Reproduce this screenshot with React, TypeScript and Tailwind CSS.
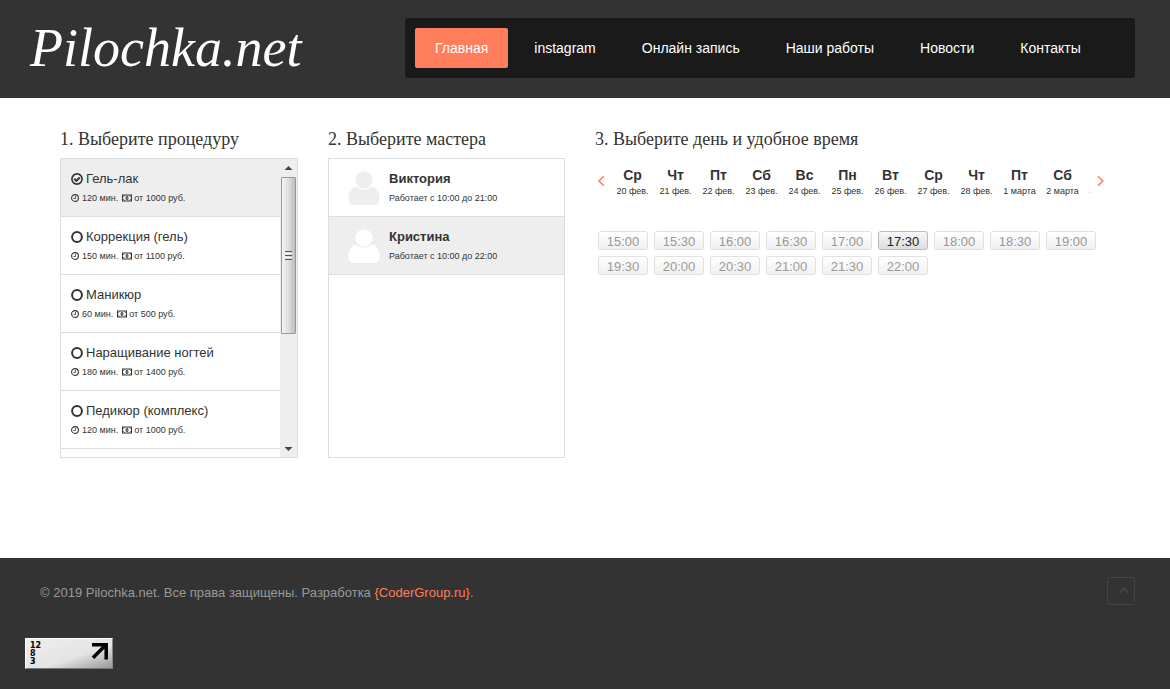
import { useState } from "react";

const navItems = ["Главная", "instagram", "Онлайн запись", "Наши работы", "Новости", "Контакты"];

const services = [
  { name: "Гель-лак", minutes: 120, price: 1000 },
  { name: "Коррекция (гель)", minutes: 150, price: 1100 },
  { name: "Маникюр", minutes: 60, price: 500 },
  { name: "Наращивание ногтей", minutes: 180, price: 1400 },
  { name: "Педикюр (комплекс)", minutes: 120, price: 1000 },
];

const masters = [
  { name: "Виктория", hours: "Работает с 10:00 до 21:00" },
  { name: "Кристина", hours: "Работает с 10:00 до 22:00" },
];

const days = [
  ["Ср", "20 фев."],
  ["Чт", "21 фев."],
  ["Пт", "22 фев."],
  ["Сб", "23 фев."],
  ["Вс", "24 фев."],
  ["Пн", "25 фев."],
  ["Вт", "26 фев."],
  ["Ср", "27 фев."],
  ["Чт", "28 фев."],
  ["Пт", "1 марта"],
  ["Сб", "2 марта"],
  ["Вс", "3 марта"],
];

const times = [
  "15:00", "15:30", "16:00", "16:30", "17:00", "17:30", "18:00", "18:30",
  "19:00", "19:30", "20:00", "20:30", "21:00", "21:30", "22:00",
];

function RadioIcon({ checked }: { checked: boolean }) {
  return (
    <svg className="size-3 shrink-0" viewBox="0 0 12 12" fill="none" stroke="currentColor" aria-hidden="true">
      <circle cx="6" cy="6" r={checked ? 5.1 : 4.9} strokeWidth={checked ? 1.6 : 2} />
      {checked && <path d="M3.300 5.800 5.400 7.900 8.700 4.500" strokeWidth="2" />}
    </svg>
  );
}

function ClockIcon() {
  return (
    <svg className="size-2 shrink-0" viewBox="0 0 8 8" fill="none" stroke="currentColor" aria-hidden="true">
      <circle cx="4" cy="4" r="3.4" strokeWidth="1.1" />
      <path d="M4.4 1.9V4.5H2.5" strokeWidth="0.8" />
    </svg>
  );
}

function MoneyIcon() {
  return (
    <svg className="h-2 w-[10px] shrink-0" viewBox="0 0 10 8" fill="none" stroke="currentColor" aria-hidden="true">
      <rect x="0.5" y="1" width="9" height="6" strokeWidth="1" />
      <path d="M1 2.6Q2.4 2.6 2.4 1.4M9 2.6Q7.6 2.6 7.6 1.4M1 5.4Q2.4 5.4 2.4 6.6M9 5.4Q7.6 5.4 7.6 6.6" strokeWidth="0.6" />
      <ellipse cx="5" cy="4" rx="1.5" ry="1.9" fill="currentColor" stroke="none" />
      <path d="M5 2.9V5.1" stroke="#fff" strokeWidth="0.6" />
    </svg>
  );
}

function UserIcon() {
  return (
    <svg className="h-[34px] w-8 shrink-0" viewBox="0 0 32 34" fill="currentColor" aria-hidden="true">
      <circle cx="16" cy="8.8" r="8.6" />
      <path d="M8.2 15.8C2.2 16.2.4 22.4.4 28.2c0 3.6 2.3 5.8 5.6 5.8h20c3.3 0 5.6-2.2 5.6-5.8 0-5.8-1.800-12-7.800-12.4-2.200 1.700-4.700 2.900-7.800 2.900s-5.600-1.200-7.800-2.900Z" />
    </svg>
  );
}

function Chevron({ d, className }: { d: string; className: string }) {
  return (
    <svg className={className} viewBox="0 0 12 12" fill="none" stroke="currentColor" strokeWidth="1.6" aria-hidden="true">
      <path d={d} />
    </svg>
  );
}

function Heading({ children }: { children: string }) {
  return <h2 className="mb-[7px] font-['Liberation_Serif',serif] text-lg leading-6 text-[#333]">{children}</h2>;
}

function ScrollTrack() {
  return (
    <div className="flex w-[17px] shrink-0 flex-col items-center bg-[#eee] text-[#444]" aria-hidden="true">
      <svg className="h-[18px] w-[15px]" viewBox="0 0 15 18">
        <path d="M3.500 11 7.500 7l4 4Z" fill="currentColor" />
      </svg>
      <div className="flex h-[157px] w-[15px] flex-col items-center justify-center gap-px rounded-[1px] border border-[#989898] bg-gradient-to-r from-[#f5f5f5] via-[#dedee0] to-[#bdbdc2]">
        <span className="h-px w-[7px] bg-[#555]" />
        <span className="h-px w-[7px] bg-white" />
        <span className="h-px w-[7px] bg-[#555]" />
        <span className="h-px w-[7px] bg-white" />
        <span className="h-px w-[7px] bg-[#555]" />
      </div>
      <svg className="mt-auto h-[18px] w-[15px]" viewBox="0 0 15 18">
        <path d="M3.500 8h8l-4 4Z" fill="currentColor" />
      </svg>
    </div>
  );
}

export default function App() {
  const [service, setService] = useState(0);
  const [master, setMaster] = useState(1);
  const [time, setTime] = useState("17:30");

  return (
    <div className="flex min-h-screen flex-col bg-white font-['Liberation_Sans',sans-serif] text-[#333]">
      <header className="flex items-start justify-between bg-[#333] pt-[18px] pr-[35px] pb-5 pl-[30px]">
        <a href="#" className="font-['Liberation_Serif',serif] text-[54px] leading-[60px] text-white italic">
          Pilochka.net
        </a>
        <nav className="flex w-full max-w-[730px] gap-[6px] rounded-[3px] bg-[#1a1a1a] p-[10px]">
          {navItems.map((item, i) => (
            <a
              key={item}
              href="#"
              className={`rounded-[2px] px-5 text-sm leading-10 whitespace-nowrap text-white ${i === 0 ? "bg-[#ff7f5c]" : ""}`}
            >
              {item}
            </a>
          ))}
        </nav>
      </header>

      <main className="grid flex-1 grid-cols-[238fr_237fr_515fr] items-start gap-[30px] px-[60px] pt-[29px] pb-[100px]">
        <section>
          <Heading>1. Выберите процедуру</Heading>
          <div className="flex h-[300px] border border-[#ddd]">
            <div className="flex-1 overflow-hidden">
              {services.map((s, i) => (
                <label
                  key={s.name}
                  className={`flex h-[58px] cursor-pointer flex-col border-b border-[#ddd] px-[10px] pt-[10px] ${service === i ? "bg-[#eee]" : ""}`}
                >
                  <input
                    type="radio"
                    name="service"
                    className="sr-only"
                    checked={service === i}
                    onChange={() => setService(i)}
                  />
                  <span className="flex items-center gap-[3px] text-[13px] leading-[19px]">
                    <RadioIcon checked={service === i} />
                    {s.name}
                  </span>
                  <span className="flex items-center text-[9px] leading-5">
                    <ClockIcon />
                    <span className="mr-1 ml-[3px]">{s.minutes} мин.</span>
                    <MoneyIcon />
                    <span className="ml-[2px]">от {s.price} руб.</span>
                  </span>
                </label>
              ))}
            </div>
            <ScrollTrack />
          </div>
        </section>

        <section>
          <Heading>2. Выберите мастера</Heading>
          <div className="h-[300px] border border-[#ddd]">
            {masters.map((m, i) => (
              <button
                key={m.name}
                type="button"
                onClick={() => setMaster(i)}
                className={`flex h-[58px] w-full items-start gap-[9px] border-b border-[#ddd] pt-[10px] pl-[19px] text-left ${master === i ? "bg-[#eee]" : ""}`}
              >
                <span className={`pt-[2px] ${master === i ? "text-white" : "text-[#eee]"}`}>
                  <UserIcon />
                </span>
                <span className="flex flex-col">
                  <span className="text-[13px] leading-[19px] font-bold">{m.name}</span>
                  <span className="text-[9px] leading-5">{m.hours}</span>
                </span>
              </button>
            ))}
          </div>
        </section>

        <section className="min-w-0">
          <Heading>3. Выберите день и удобное время</Heading>
          <div className="flex items-center pt-[6px] text-[#ff7f5c]">
            <button type="button" aria-label="Раньше" className="w-4 shrink-0">
              <Chevron d="M8.800 1.200 4 6l4.800 4.800" className="size-3" />
            </button>
            <div className="flex flex-1 overflow-hidden text-[#333]">
              {days.map(([day, date]) => (
                <button key={date} type="button" className="flex w-[43px] shrink-0 flex-col items-center">
                  <span className="pt-px text-sm leading-5 font-bold">{day}</span>
                  <span className="text-[9px] leading-3 whitespace-nowrap">{date}</span>
                </button>
              ))}
            </div>
            <button type="button" aria-label="Позже" className="flex w-5 shrink-0 justify-center">
              <Chevron d="M4 1.200 8.800 6 4 10.800" className="size-3" />
            </button>
          </div>
          <div className="mt-[34px] flex flex-wrap gap-[6px] pl-[3px]">
            {times.map((t) => (
              <button
                key={t}
                type="button"
                onClick={() => setTime(t)}
                className={`h-[19px] w-[50px] rounded-[3px] border bg-gradient-to-b pt-px text-[13px] leading-[17px] ${
                  time === t
                    ? "border-[#bbb] from-[#f8f8f8] to-[#ddd] text-[#222]"
                    : "border-[#e0e0e0] from-white to-[#f0f0f0] text-[#999]"
                }`}
              >
                {t}
              </button>
            ))}
          </div>
        </section>
      </main>

      <footer className="bg-[#333] pt-[19px] pr-[35px] pb-[21px] pl-[25px]">
        <div className="flex items-start justify-between pl-[15px]">
          <p className="text-[13px] leading-8 text-[#999]">
            © 2019 Pilochka.net. Все права защищены. Разработка{" "}
            <a href="#" className="text-[#ff7f5c]">
              {"{CoderGroup.ru}"}
            </a>
            .
          </p>
          <a
            href="#"
            aria-label="Наверх"
            className="flex size-7 items-center justify-end rounded-[2px] border border-[#444] pr-[4px] text-[#484848]"
          >
            <Chevron d="M1.500 8 6 3.500 10.500 8" className="size-3" />
          </a>
        </div>
        <a
          href="#"
          className="mt-[29px] flex h-[31px] w-[88px] justify-between border border-t-white border-r-[#888] border-b-[#777] border-l-white bg-gradient-to-br from-[#eee] via-[#e4e4e4] via-60% to-[#999] pt-[3px] pr-[3px] pl-1 text-black"
        >
          <span className="flex flex-col font-['DejaVu_Sans',sans-serif] text-[8px] leading-2 font-bold">
            <span>12</span>
            <span>8</span>
            <span>3</span>
          </span>
          <svg className="h-[18px] w-[19px]" viewBox="0 0 19 18" fill="none" stroke="#000" strokeWidth="3.500" aria-hidden="true">
            <path d="M2 2.700H16.200V17.500M15.500 3.300 3 15.800" />
          </svg>
        </a>
      </footer>
    </div>
  );
}
